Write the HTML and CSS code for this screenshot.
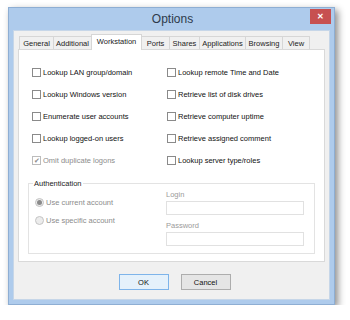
FILE: index.html
```html
<!DOCTYPE html>
<html lang="en">
<head>
    <meta charset="UTF-8">
    <title>Options</title>
    <link rel="stylesheet" href="styles.css">
</head>
<body>
    <div class="window">
        <div class="titlebar">
            <span class="title">Options</span>
            <span class="close-btn">&#x2715;</span>
        </div>
        <div class="client">
            <div class="tabs">
                <span class="tab tab-general">General</span>
                <span class="tab tab-additional">Additional</span>
                <span class="tab tab-workstation active">Workstation</span>
                <span class="tab tab-ports">Ports</span>
                <span class="tab tab-shares">Shares</span>
                <span class="tab tab-applications">Applications</span>
                <span class="tab tab-browsing">Browsing</span>
                <span class="tab tab-view">View</span>
            </div>
            <div class="panel">
                <div class="checks">
                    <label class="check"><span class="box"></span>Lookup LAN group/domain</label>
                    <label class="check"><span class="box"></span>Lookup remote Time and Date</label>
                    <label class="check"><span class="box"></span>Lookup Windows version</label>
                    <label class="check"><span class="box"></span>Retrieve list of disk drives</label>
                    <label class="check"><span class="box"></span>Enumerate user accounts</label>
                    <label class="check"><span class="box"></span>Retrieve computer uptime</label>
                    <label class="check"><span class="box"></span>Lookup logged-on users</label>
                    <label class="check"><span class="box"></span>Retrieve assigned comment</label>
                    <label class="check disabled"><span class="box checked">&#x2714;</span>Omit duplicate logons</label>
                    <label class="check"><span class="box"></span>Lookup server type/roles</label>
                </div>

                <fieldset class="auth">
                    <legend>Authentication</legend>
                    <div class="radios">
                        <label class="radio"><span class="dot on"></span>Use current account</label>
                        <label class="radio"><span class="dot"></span>Use specific account</label>
                    </div>
                    <div class="fields">
                        <span class="field-label">Login</span>
                        <span class="input"></span>
                        <span class="field-label">Password</span>
                        <span class="input"></span>
                    </div>
                </fieldset>
            </div>
            <div class="buttons">
                <span class="btn default">OK</span>
                <span class="btn">Cancel</span>
            </div>
        </div>
    </div>
</body>
</html>
```

FILE: styles.css
```css
* {
    margin: 0;
    padding: 0;
    box-sizing: border-box;
}

body {
    background-color: #fff;
    font-family: 'Liberation Sans', Arial, sans-serif;
    font-size: 7.5px;
    color: #111;
}

.window {
    margin: 7px 0 0 8px;
    width: 327px;
    height: 298px;
    background-color: #aecbec;
    border: 1px solid #8eaed3;
    box-shadow: 3px 3px 7px rgba(0, 0, 0, 0.45);
    display: flex;
    flex-direction: column;
}

.titlebar {
    height: 22px;
    position: relative;
    display: flex;
    justify-content: center;
    align-items: center;
}

.title {
    font-size: 12px;
    color: #2d3a4a;
    margin-left: 2px;
}

.close-btn {
    position: absolute;
    top: 1px;
    right: 3px;
    width: 21px;
    height: 15px;
    background-color: #c75050;
    color: #fff;
    font-size: 8px;
    font-weight: bold;
    display: flex;
    justify-content: center;
    align-items: center;
}

.client {
    flex: 1;
    margin: 0 4px 4px 4px;
    background-color: #f0f0f0;
    border: 1px solid #c6d6e8;
    padding: 3px 4px 0 4px;
    display: flex;
    flex-direction: column;
}

.tabs {
    display: flex;
    align-items: flex-end;
    height: 15px;
    padding-left: 1px;
}

.tab {
    height: 13px;
    border: 1px solid #d6d6d6;
    border-bottom: none;
    background-color: #f0f0f0;
    display: flex;
    justify-content: center;
    align-items: center;
    margin-right: -1px;
    color: #222;
}

.tab-general { width: 35px; }
.tab-additional { width: 39px; }
.tab-workstation { width: 51px; }
.tab-ports { width: 29px; }
.tab-shares { width: 31px; }
.tab-applications { width: 47px; }
.tab-browsing { width: 38px; }
.tab-view { width: 28px; }

.tab.active {
    background-color: #fff;
    position: relative;
    z-index: 1;
    margin-bottom: -1px;
    height: 16px;
    padding-bottom: 2px;
}

.panel {
    height: 213px;
    background-color: #fff;
    border: 1px solid #d9d9d9;
    padding: 17px 9px 0 9px;
}

.checks {
    display: grid;
    grid-template-columns: 135px 1fr;
    grid-auto-rows: 22px;
    padding-left: 4px;
}

.check {
    display: flex;
    align-items: center;
    gap: 2px;
    height: 10px;
}

.box {
    width: 9px;
    height: 9px;
    border: 1px solid #8a8a8a;
    background-color: #fff;
    display: flex;
    justify-content: center;
    align-items: center;
    font-size: 7px;
    line-height: 1;
}

.check.disabled {
    color: #8c8c8c;
}

.box.checked {
    border-color: #bcbcbc;
    color: #8c8c8c;
}

.auth {
    margin-top: 2px;
    height: 75px;
    border: 1px solid #e3e3e3;
    padding: 0 10px 0 6px;
    display: flex;
}

.auth legend {
    padding: 0 1px;
    margin-left: -2px;
    color: #222;
    font-size: 7.5px;
}

.radios {
    width: 131px;
    padding-top: 9px;
    display: flex;
    flex-direction: column;
    gap: 8px;
    color: #8c8c8c;
}

.radio {
    display: flex;
    align-items: center;
    gap: 2px;
    height: 10px;
}

.dot {
    width: 9px;
    height: 9px;
    border-radius: 50%;
    border: 1px solid #c4c4c4;
    background-color: #ececec;
    display: flex;
    justify-content: center;
    align-items: center;
}

.dot.on::after {
    content: "";
    width: 5px;
    height: 5px;
    border-radius: 50%;
    background-color: #8a8a8a;
}

.fields {
    flex: 1;
    display: flex;
    flex-direction: column;
    color: #9a9a9a;
    padding-top: 3px;
}

.field-label {
    height: 10px;
    margin-top: -1px;
}

.input {
    height: 14px;
    border: 1px solid #e1e1e1;
    background-color: #fff;
    margin-top: 1px;
    margin-bottom: 7px;
}

.input:last-child {
    margin-top: 2px;
}

.buttons {
    display: flex;
    justify-content: center;
    gap: 12px;
    padding-top: 12px;
    padding-left: 6px;
}

.btn {
    width: 50px;
    height: 16px;
    border: 1px solid #adadad;
    background-color: #e5e5e5;
    display: flex;
    justify-content: center;
    align-items: center;
    color: #111;
}

.btn.default {
    border-color: #7eb4ea;
    background-color: #e5f1fb;
}
```
